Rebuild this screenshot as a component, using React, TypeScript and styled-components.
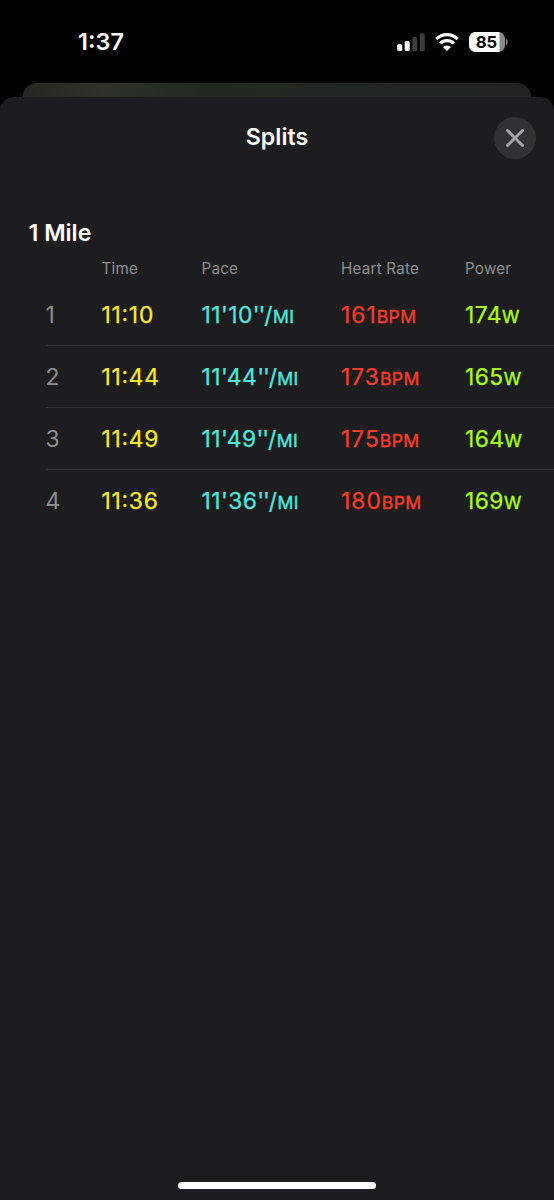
import React from "react";
import styled, { createGlobalStyle } from "styled-components";

const GlobalStyle = createGlobalStyle`
  * { box-sizing: border-box; }
  body {
    margin: 0;
    background: #000;
    font-family: Inter, "Liberation Sans", sans-serif;
    font-feature-settings: "calt" 1;
  }
`;

const Screen = styled.div`
  display: flex;
  flex-direction: column;
  width: 554px;
  height: 1200px;
  overflow: hidden;
  background: #000;
  color: #fff;
`;

const StatusBar = styled.header`
  display: flex;
  align-items: center;
  justify-content: space-between;
  height: 83px;
  padding: 0 46px 0 78px;
`;

const Clock = styled.time`
  font-size: 23.4px;
  line-height: 28px;
  font-weight: 600;
  letter-spacing: 0.1px;
`;

const StatusIcons = styled.div`
  display: flex;
  align-items: center;
  gap: 10px;
`;

const BackCard = styled.div`
  flex: none;
  height: 14px;
  margin: 0 23px;
  border-radius: 14px 14px 0 0;
  background: linear-gradient(
    90deg,
    #262724 0,
    #30312b 80px,
    #2a2c27 130px,
    #242622 180px,
    #252721 255px,
    #232424 290px,
    #222223 100%
  );
`;

const Sheet = styled.main`
  display: flex;
  flex: 1;
  flex-direction: column;
  border-radius: 14px 14px 0 0;
  background: #1d1d1f;
`;

const SheetHeader = styled.div`
  display: grid;
  grid-template-columns: 42px 1fr 42px;
  align-items: center;
  height: 81px;
  padding: 0 18.5px;
`;

const Title = styled.h1`
  grid-column: 2;
  margin: 0 0 2px;
  font-size: 23.2px;
  line-height: 28px;
  font-weight: 600;
  letter-spacing: 0;
  text-align: center;
`;

const CloseButton = styled.button`
  display: flex;
  align-items: center;
  justify-content: center;
  width: 42px;
  height: 42px;
  padding: 0;
  border: 0;
  border-radius: 50%;
  background: #323236;
`;

const SectionTitle = styled.h2`
  margin: 41px 0 5px 28.5px;
  font-size: 23.2px;
  line-height: 28px;
  font-weight: 600;
  letter-spacing: 0;
`;

const Columns = styled.div`
  display: grid;
  grid-template-columns: 56px 100px 139.5px 124px 1fr;
  align-items: center;
  margin-left: 45.5px;
`;

const ColumnHeads = styled(Columns)`
  height: 32px;
  color: #8e8e93;
  font-size: 15.2px;
  letter-spacing: 0.22px;
`;

const Row = styled(Columns)`
  height: 62px;
  border-bottom: 1px solid #333336;
  font-size: 22.8px;
  line-height: 28px;

  &:last-child {
    border-bottom-color: transparent;
  }
`;

const Index = styled.span`
  color: #8e8e93;
`;

const Value = styled.span<{ $color: string; $spacing: number }>`
  color: ${(p) => p.$color};
  letter-spacing: ${(p) => p.$spacing}px;
  white-space: nowrap;
  -webkit-text-stroke: 0.25px currentColor;
`;

const Seconds = styled.span`
  letter-spacing: -1.1px;
`;

const Unit = styled.span`
  font-size: 17.6px;
  line-height: 0;
  letter-spacing: 0.4px;
  -webkit-text-stroke: 0.4px currentColor;
`;

const HomeBar = styled.div`
  width: 198px;
  height: 7.5px;
  margin: auto auto 11px 178.3px;
  border-radius: 4px;
  background: #fff;
`;

const SignalIcon = () => (
  <svg width="28" height="18" viewBox="0 0 28 18">
    <rect x="0.2" y="11" width="5" height="7" rx="1.6" fill="#fff" />
    <rect x="7.7" y="8" width="5" height="10" rx="1.6" fill="#fff" />
    <rect x="15.3" y="4" width="5" height="14" rx="1.6" fill="#3c3c3c" />
    <rect x="22.8" y="0.3" width="5" height="17.7" rx="1.6" fill="#3c3c3c" />
  </svg>
);

const WifiIcon = () => (
  <svg width="24" height="18" viewBox="0 0 24 18">
    <g fill="none" stroke="#fff" strokeWidth="3.3">
      <path d="M1.3 6.1a15.2 15.2 0 0 1 21.4 0" />
      <path d="M5.1 10.4a9.8 9.8 0 0 1 13.8 0" />
    </g>
    <path fill="#fff" d="M8 14a5.8 5.8 0 0 1 8 0l-3.4 3.5q-.6.5-1.2 0z" />
  </svg>
);

const BatteryIcon = () => (
  <svg width="39" height="20" viewBox="0 0 39 20">
    <defs>
      <clipPath id="battery">
        <rect width="36" height="20" rx="6.6" />
      </clipPath>
    </defs>
    <g clipPath="url(#battery)">
      <rect width="36" height="20" fill="#8a8a8a" />
      <rect width="30.5" height="20" fill="#fff" />
    </g>
    <path d="M37 6.8q1.7 1 1.7 3.2T37 13.2z" fill="#8a8a8a" />
    <text x="17.5" y="16.1" textAnchor="middle" fontSize="16.6" fontWeight="700" fill="#000">
      85
    </text>
  </svg>
);

const CloseIcon = () => (
  <svg width="20" height="20" viewBox="0 0 20 20">
    <path d="M2.5 2.5l15 15M17.5 2.5l-15 15" stroke="#a4a4aa" strokeWidth="3" strokeLinecap="round" />
  </svg>
);

const splits = [
  { time: "11:10", pace: "11'10", heartRate: 161, power: 174 },
  { time: "11:44", pace: "11'44", heartRate: 173, power: 165 },
  { time: "11:49", pace: "11'49", heartRate: 175, power: 164 },
  { time: "11:36", pace: "11'36", heartRate: 180, power: 169 },
];

export default function App() {
  return (
    <Screen>
      <GlobalStyle />
      <StatusBar>
        <Clock>1:37</Clock>
        <StatusIcons>
          <SignalIcon />
          <WifiIcon />
          <BatteryIcon />
        </StatusIcons>
      </StatusBar>
      <BackCard />
      <Sheet>
        <SheetHeader>
          <Title>Splits</Title>
          <CloseButton aria-label="Close">
            <CloseIcon />
          </CloseButton>
        </SheetHeader>
        <SectionTitle>1 Mile</SectionTitle>
        <ColumnHeads>
          <span />
          <span>Time</span>
          <span>Pace</span>
          <span>Heart Rate</span>
          <span>Power</span>
        </ColumnHeads>
        <div>
          {splits.map((s, i) => (
            <Row key={s.time}>
              <Index>{i + 1}</Index>
              <Value $color="#fde930" $spacing={0.75}>
                {s.time}
              </Value>
              <Value $color="#4ce8df" $spacing={0.45}>
                {s.pace}
                <Seconds>''</Seconds>/<Unit>MI</Unit>
              </Value>
              <Value $color="#f93c25" $spacing={1}>
                {s.heartRate}
                <Unit>BPM</Unit>
              </Value>
              <Value $color="#a9fd18" $spacing={0.45}>
                {s.power}
                <Unit>W</Unit>
              </Value>
            </Row>
          ))}
        </div>
        <HomeBar />
      </Sheet>
    </Screen>
  );
}
